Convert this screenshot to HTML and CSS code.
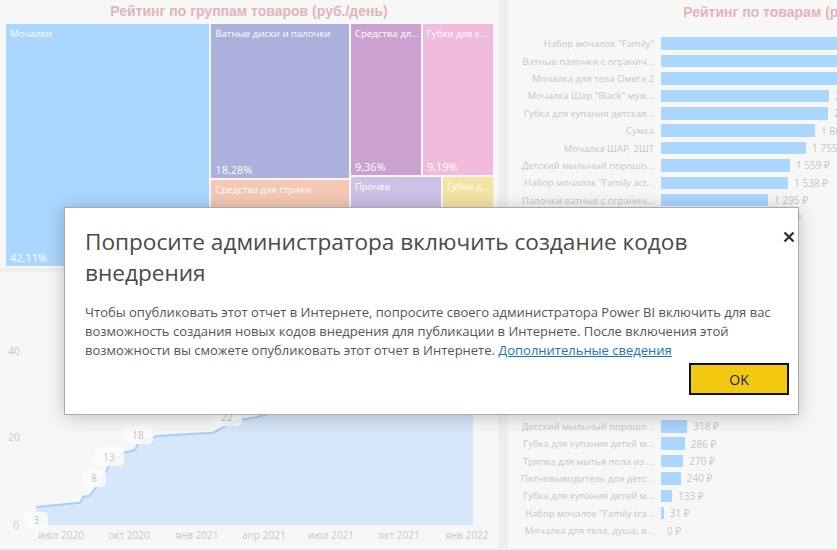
FILE: index.html
```html
<!DOCTYPE html>
<html lang="ru">
<head>
    <title>Рейтинг продаж</title>
    <link rel="stylesheet" href="styles.css">
</head>
<body>
    <div class="dash">
        <div class="left">
            <section class="panel tree-panel">
                <h2 class="title">Рейтинг по группам товаров (руб./день)</h2>
                <div class="treemap">
                    <div class="tile t-mochalki">
                        <span class="name">Мочалки</span>
                        <span class="pct">42,11%</span>
                    </div>
                    <div class="tcol tcol-a">
                        <div class="tile t-vata">
                            <span class="name">Ватные диски и палочки</span>
                            <span class="pct">18,28%</span>
                        </div>
                        <div class="tile t-strika">
                            <span class="name">Средства для стрики</span>
                        </div>
                    </div>
                    <div class="tcol tcol-b">
                        <div class="trow trow-top">
                            <div class="tile t-sredstva">
                                <span class="name">Средства дл...</span>
                                <span class="pct">9,36%</span>
                            </div>
                            <div class="tile t-gubki">
                                <span class="name">Губки для к...</span>
                                <span class="pct">9,19%</span>
                            </div>
                        </div>
                        <div class="trow trow-bottom">
                            <div class="tile t-prochee">
                                <span class="name">Прочее</span>
                            </div>
                            <div class="tile t-gubki2">
                                <span class="name">Губки д...</span>
                            </div>
                        </div>
                    </div>
                </div>
            </section>

            <section class="panel line-panel">
                <svg class="line-chart" width="498" height="276" viewBox="0 272 498 276">
                    <g class="axis">
                        <text x="14" y="355" text-anchor="middle">40</text>
                        <text x="14" y="441" text-anchor="middle">20</text>
                        <text x="16" y="529" text-anchor="middle">0</text>
                        <text x="61" y="539" text-anchor="middle">июл 2020</text>
                        <text x="129" y="539" text-anchor="middle">окт 2020</text>
                        <text x="197" y="539" text-anchor="middle">янв 2021</text>
                        <text x="264" y="539" text-anchor="middle">апр 2021</text>
                        <text x="331" y="539" text-anchor="middle">июл 2021</text>
                        <text x="399" y="539" text-anchor="middle">окт 2021</text>
                        <text x="467" y="539" text-anchor="middle">янв 2022</text>
                    </g>
                    <path class="area" d="M36,525 L36,507 L80,502.7 L83,497 L90,495.5 L97,486 L107,470 L110,463 L123,453 L135,450 L138,443 L147,440 L157,436 L213,432.7 L220,429 L227,425 L240,420 L257,417 L300,405 L473,330 L473,525 Z"/>
                    <path class="line" d="M36,507 L80,502.7 L83,497 L90,495.5 L97,486 L107,470 L110,463 L123,453 L135,450 L138,443 L147,440 L157,436 L213,432.7 L220,429 L227,425 L240,420 L257,417 L300,405 L473,330"/>
                    <g class="dlabel">
                        <rect x="25" y="512" width="23" height="17" rx="5"/>
                        <text x="36" y="524" text-anchor="middle">3</text>
                        <rect x="82" y="469" width="24" height="18" rx="5"/>
                        <text x="94" y="482" text-anchor="middle">8</text>
                        <rect x="94" y="447" width="30" height="19" rx="5"/>
                        <text x="109" y="461" text-anchor="middle">13</text>
                        <rect x="124" y="425" width="29" height="19" rx="5"/>
                        <text x="138" y="439" text-anchor="middle">18</text>
                        <rect x="213" y="409" width="29" height="17" rx="5"/>
                        <text x="227" y="421" text-anchor="middle">22</text>
                    </g>
                </svg>
            </section>
        </div>

        <section class="panel bars-panel">
            <h2 class="title">Рейтинг по товарам (руб./день)</h2>
            <div id="bars"></div>
        </section>
    </div>

    <div class="modal">
        <button class="close" aria-label="Закрыть">
            <svg width="12" height="12" viewBox="0 0 12 12">
                <path d="M1.5 1.5 L10.5 10.5 M10.5 1.5 L1.5 10.5"/>
            </svg>
        </button>
        <h1 class="modal-title">Попросите администратора включить создание кодов<br>внедрения</h1>
        <p class="modal-text">Чтобы опубликовать этот отчет в Интернете, попросите своего администратора Power BI включить для вас<br>возможность создания новых кодов внедрения для публикации в Интернете. После включения этой<br>возможности вы сможете опубликовать этот отчет в Интернете. <a href="#">Дополнительные сведения</a></p>
        <div class="modal-actions">
            <button class="ok">OK</button>
        </div>
    </div>

    <script>
        // Products by revenue, rub per day
        const products = [
            ['Набор мочалок "Family"', 2650],
            ['Ватные палочки с огранич...', 2480],
            ['Мочалка для тела Омега 2', 2320],
            ['Мочалка Шар "Black" муж...', 2031],
            ['Губка для купания детская...', 2020],
            ['Сумка', 1862],
            ['Мочалка ШАР, 2ШТ', 1755],
            ['Детский мыльный порошо...', 1559],
            ['Набор мочалок "Family act...', 1538],
            ['Палочки ватные с огранич...', 1295],
            ['Мочалка для тела Омега', 1210],
            ['Губка для посуды', 1104],
            ['Ватные диски 120 шт', 990],
            ['Мочалка для лица', 902],
            ['Губка для купания', 820],
            ['Средство для стирки', 760],
            ['Мочалка Шар "White"', 690],
            ['Ватные палочки детские', 610],
            ['Губка для тела', 540],
            ['Набор губок', 470],
            ['Мочалка-варежка', 410],
            ['Пятновыводитель', 352],
            ['Детский мыльный порошо...', 318],
            ['Губка для купания детей м...', 286],
            ['Тряпка для мытья пола из ...', 270],
            ['Пятновыводитель для детс...', 240],
            ['Губка для купания детей м...', 133],
            ['Набор мочалок "Family tra...', 31],
            ['Мочалка для тела, душа, в...', 0]
        ];

        const scale = 0.0827;
        const barsDiv = document.getElementById('bars');
        const fmt = (v) => v.toString().replace(/\B(?=(\d{3})+(?!\d))/g, ' ') + ' ₽';

        products.forEach(([name, value]) => {
            const row = document.createElement('div');
            row.className = 'bar-row';
            row.innerHTML = `
                <span class="bar-label">${name}</span>
                <span class="bar-cell">
                    <span class="bar" style="width: ${(value * scale).toFixed(1)}px"></span>
                    <span class="bar-value">${fmt(value)}</span>
                </span>`;
            barsDiv.appendChild(row);
        });
    </script>
</body>
</html>
```

FILE: styles.css
```css
body {
    margin: 0;
    width: 837px;
    height: 550px;
    overflow: hidden;
    background-color: #eeeeee;
    font-family: "Open Sans", "Noto Sans", sans-serif;
    position: relative;
}

.dash {
    display: grid;
    grid-template-columns: 498px 568px;
    column-gap: 10px;
    height: 548px;
}

.left {
    display: flex;
    flex-direction: column;
    gap: 4px;
}

.panel {
    background-color: #f7f7f7;
}

.title {
    margin: 0;
    height: 24px;
    line-height: 22px;
    text-align: center;
    font-family: "Liberation Sans", Arial, sans-serif;
    font-weight: bold;
    font-size: 14px;
    color: #e2b5b9;
}

/* treemap */
.tree-panel {
    height: 268px;
}

.treemap {
    display: flex;
    gap: 2px;
    height: 242px;
    margin: 0 5px 0 6px;
}

.tcol {
    display: flex;
    flex-direction: column;
    gap: 2px;
}

.tcol-a {
    width: 138px;
}

.tcol-b {
    flex: 1;
}

.trow {
    display: flex;
    gap: 2px;
}

.trow-top {
    height: 151px;
}

.trow-bottom {
    flex: 1;
}

.tile {
    display: flex;
    flex-direction: column;
    justify-content: space-between;
    padding: 3px 4px 1px;
    color: #ffffff;
    overflow: hidden;
    white-space: nowrap;
    box-sizing: border-box;
}

.tile .name {
    font-size: 9.6px;
    line-height: 14px;
}

.tile .pct {
    font-size: 11px;
    line-height: 15px;
}

.t-mochalki { width: 204px; background-color: #abd6fd; }
.t-vata { height: 154px; background-color: #abb0dd; }
.t-strika { flex: 1; background-color: #f4c8b4; }
.t-sredstva { width: 70px; background-color: #cba2cf; }
.t-gubki { flex: 1; background-color: #f1bbde; }
.t-prochee { width: 90px; background-color: #cec1e6; }
.t-gubki2 { flex: 1; background-color: #f4e4a2; }

/* line chart */
.line-panel {
    flex: 1;
}

.line-chart {
    display: block;
}

.axis text {
    font-size: 10px;
    fill: #c9c9c9;
}

.area {
    fill: #d6e7f9;
}

.line {
    fill: none;
    stroke: #a8cff5;
    stroke-width: 2;
}

.dlabel rect {
    fill: #fbfbfb;
    opacity: 0.85;
}

.dlabel text {
    font-size: 10px;
    fill: #c4c4c4;
}

/* bar chart */
.bars-panel .title {
    height: 35px;
    line-height: 24px;
}

.bar-row {
    display: grid;
    grid-template-columns: 146px 1fr;
    column-gap: 7px;
    height: 17.4px;
    align-items: center;
}

.bar-label {
    text-align: right;
    font-size: 9.5px;
    color: #c6c6c6;
    white-space: nowrap;
    overflow: hidden;
}

.bar-cell {
    display: flex;
    align-items: center;
    gap: 6px;
    white-space: nowrap;
}

.bar {
    height: 12.5px;
    background-color: #abd6fd;
}

.bar-value {
    font-size: 10px;
    color: #c6c6c6;
}

/* modal dialog */
.modal {
    position: absolute;
    left: 64px;
    top: 207px;
    width: 735px;
    height: 208px;
    box-sizing: border-box;
    padding: 18px 20px 0;
    background-color: #ffffff;
    border: 1px solid #a9a9a9;
    box-shadow: 0 2px 18px rgba(0, 0, 0, 0.22);
}

.close {
    position: absolute;
    right: -3px;
    top: 18px;
    width: 24px;
    height: 24px;
    padding: 0;
    border: none;
    background: none;
    cursor: pointer;
}

.close path {
    stroke: #333333;
    stroke-width: 2.4;
}

.modal-title {
    margin: 0;
    font-size: 22.6px;
    font-weight: normal;
    line-height: 31px;
    color: #4a4a4a;
}

.modal-text {
    margin: 15px 0 0;
    font-size: 13px;
    line-height: 19px;
    color: #555555;
}

.modal-text a {
    color: #1b74c5;
}

.modal-actions {
    display: flex;
    justify-content: flex-end;
    margin-top: 3px;
    margin-right: -11px;
}

.ok {
    width: 100px;
    height: 32px;
    background-color: #f2c811;
    border: 2px solid #111111;
    font-family: "Open Sans", sans-serif;
    font-size: 14px;
    color: #222222;
    cursor: pointer;
}
```
